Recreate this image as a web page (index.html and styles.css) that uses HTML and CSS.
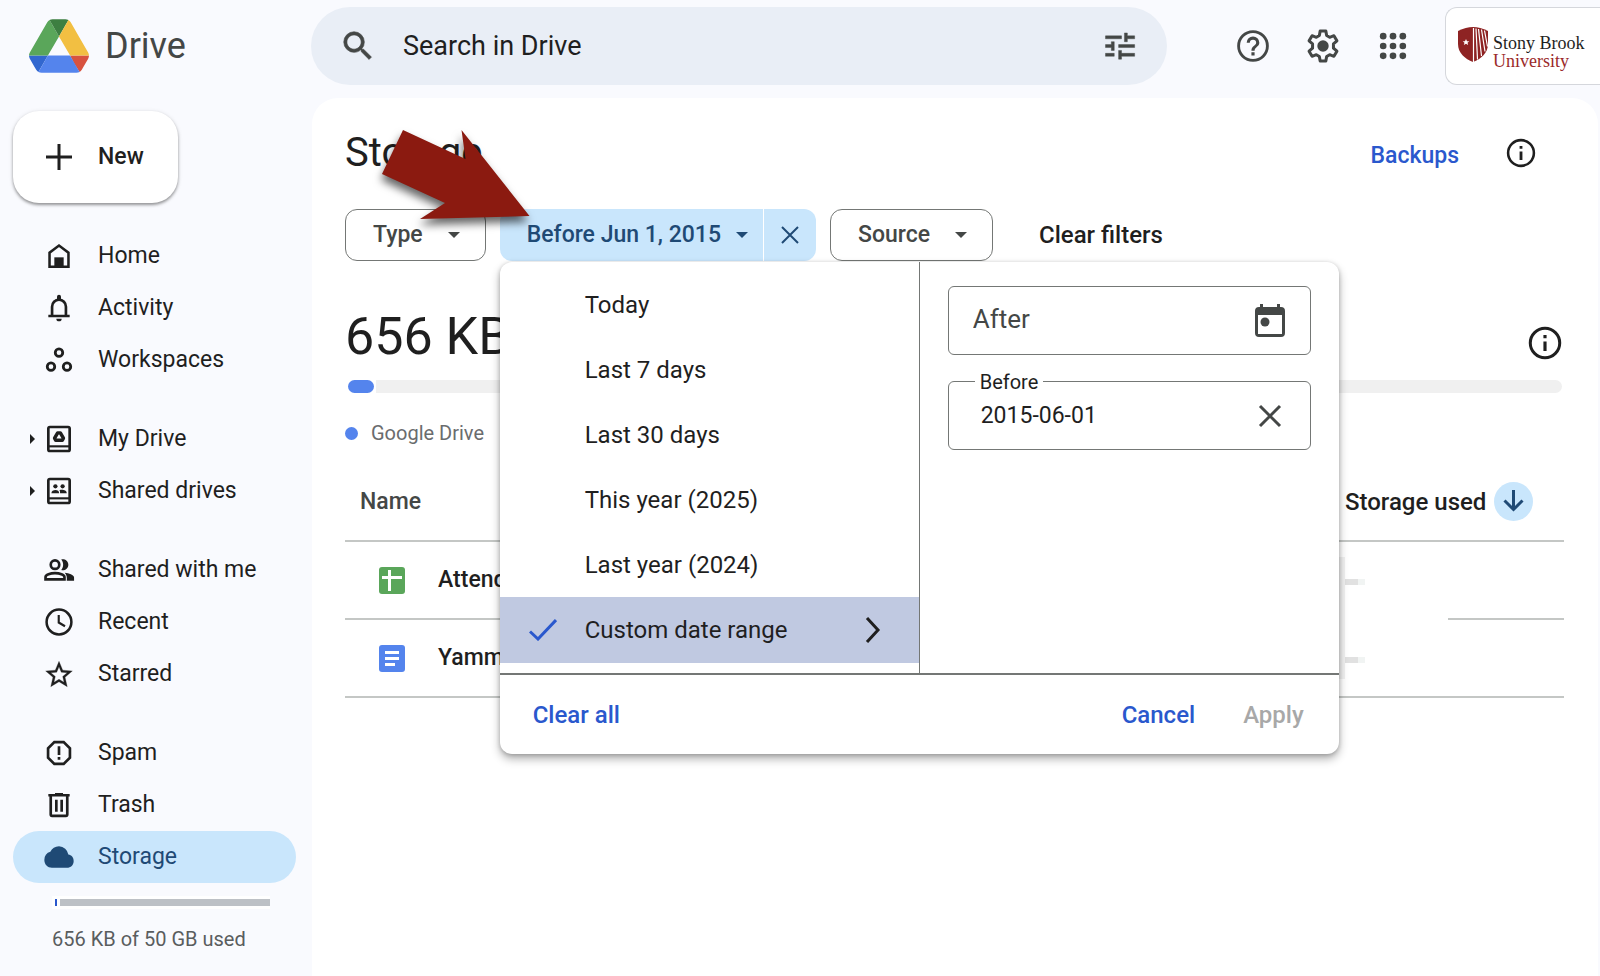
FILE: index.html
```
<!DOCTYPE html>
<html lang="en">
<head>
<meta charset="UTF-8">
<meta name="viewport" content="width=device-width, initial-scale=1.0">
<title>Storage - Drive</title>
<link rel="stylesheet" href="styles.css">
</head>
<body>

  <header class="topbar">
    <a class="brand" href="#">
      <svg width="60" height="54" viewBox="0 0 87.3 78" aria-hidden="true">
        <path d="m6.6 66.85 3.85 6.65c.8 1.4 1.95 2.5 3.3 3.3l13.75-23.8h-27.5c0 1.55.4 3.1 1.2 4.5z" fill="#3267cf"/>
        <path d="m43.65 25-13.75-23.8c-1.35.8-2.5 1.9-3.3 3.3l-25.4 44a9.06 9.06 0 0 0-1.2 4.5h27.5z" fill="#5aa65a"/>
        <path d="m73.55 76.8c1.35-.8 2.5-1.9 3.3-3.3l1.6-2.75 7.65-13.25c.8-1.4 1.2-2.95 1.2-4.5h-27.5l5.85 11.5z" fill="#d8523f"/>
        <path d="m43.65 25 13.75-23.8c-1.35-.8-2.9-1.2-4.5-1.2h-18.5c-1.6 0-3.15.45-4.5 1.2z" fill="#3d7f41"/>
        <path d="m59.8 53h-32.3l-13.75 23.8c1.35.8 2.9 1.2 4.5 1.2h50.8c1.6 0 3.15-.45 4.5-1.2z" fill="#5484ed"/>
        <path d="m73.4 26.5-12.7-22c-.8-1.4-1.95-2.5-3.3-3.3l-13.75 23.8 16.15 28h27.45c0-1.55-.4-3.1-1.2-4.5z" fill="#f2bf42"/>
      </svg>
      <span>Drive</span>
    </a>

    <form class="search">
      <button type="button" class="icon-btn" aria-label="Search">
        <svg width="38" height="38" viewBox="0 0 24 24"><path fill="currentColor" stroke="currentColor" stroke-width=".4" d="M15.500 14h-.79l-.28-.27A6.470 6.470 0 0 0 16 9.500 6.500 6.500 0 1 0 9.500 16c1.610 0 3.090-.59 4.230-1.570l.27.28v.79l5 4.990L20.490 19zm-6 0C7.010 14 5 11.990 5 9.500S7.010 5 9.500 5 14 7.010 14 9.500 11.990 14 9.500 14z"/></svg>
      </button>
      <input type="text" id="q" placeholder="Search in Drive" aria-label="Search in Drive">
      <button type="button" class="icon-btn" aria-label="Search options">
        <svg width="38" height="38" viewBox="0 0 24 24"><g transform="translate(1 1) scale(.92)"><path fill="currentColor" stroke="currentColor" stroke-width=".3" d="M2 17v2h6v-2zM2 5v2h11V5zm11 16v-2h9v-2h-9v-2h-2v6zM6 9v2H2v2h4v2h2V9zm16 4v-2H11v2zm-7-4h2V7h5V5h-5V3h-2z"/></g></svg>
      </button>
    </form>

    <button type="button" class="icon-btn" aria-label="Support">
      <svg width="38" height="38" viewBox="0 0 24 24"><path fill="currentColor" d="M11 18h2v-2h-2zm1-16a10 10 0 1 0 0 20 10 10 0 0 0 0-20zm0 18.200a8.200 8.200 0 1 1 0-16.400 8.200 8.200 0 0 1 0 16.400zM12 6a4 4 0 0 0-4 4h2a2 2 0 1 1 4 0c0 2-3 1.750-3 5h2c0-2.250 3-2.500 3-5a4 4 0 0 0-4-4z"/></svg>
    </button>
    <button type="button" class="icon-btn" aria-label="Settings">
      <svg width="38" height="38" viewBox="0 0 24 24"><path fill="none" stroke="currentColor" stroke-width="1.900" stroke-linejoin="round" d="M10.200 2.600h3.600l.5 2.800 1.900 1.100 2.700-1 1.900 3.200-2.200 1.900v2.800l2.200 1.900-1.900 3.200-2.700-1-1.900 1.100-.5 2.800h-3.600l-.5-2.800-1.900-1.100-2.700 1-1.900-3.200 2.200-1.900v-2.800L3.200 8.700l1.900-3.200 2.700 1 1.900-1.100z"/><circle cx="12" cy="12" r="3.600" fill="currentColor"/></svg>
    </button>
    <button type="button" class="icon-btn" aria-label="Apps">
      <svg width="38" height="38" viewBox="0 0 24 24" fill="currentColor"><circle cx="5.800" cy="5.800" r="2.100"/><circle cx="12" cy="5.800" r="2.100"/><circle cx="18.200" cy="5.800" r="2.100"/><circle cx="5.800" cy="12" r="2.100"/><circle cx="12" cy="12" r="2.100"/><circle cx="18.200" cy="12" r="2.100"/><circle cx="5.800" cy="18.200" r="2.100"/><circle cx="12" cy="18.200" r="2.100"/><circle cx="18.200" cy="18.200" r="2.100"/></svg>
    </button>

    <a class="account" href="#">
      <svg width="30" height="35" viewBox="0 0 30 35" aria-hidden="true">
        <path fill="#8e2323" d="M0 4Q8 0 15 0t15 4v13c0 9-7 15-15 18C7 32 0 26 0 17z"/>
        <path fill="#fff" d="M8 12l1 2.200h2.300l-1.800 1.500.7 2.300L8 16.700 5.800 18l.7-2.300-1.800-1.500H7z"/>
        <path stroke="#fff" stroke-width="1.200" d="M15.500 1v34M18 1.500l1.500 31M20.500 2l3 27M23.500 2.500l3.500 22M26.500 3.500l3 16"/>
      </svg>
      <span class="account-name">Stony Brook<br><span class="account-sub">University</span></span>
    </a>
  </header>

  <div class="layout">
    <aside class="sidebar">
      <button type="button" class="new-btn">
        <svg width="32" height="32" viewBox="0 0 32 32"><path stroke="currentColor" stroke-width="3" d="M16 3v26M3 16h26"/></svg>
        New
      </button>

      <nav>
        <ul class="nav-group">
          <li><a href="#">
            <svg class="icon" viewBox="0 0 24 24"><path fill="none" stroke="currentColor" stroke-width="1.900" d="M4.900 20.100V9.500L12 4.200l7.100 5.300v10.600z"/><path fill="currentColor" d="M8.500 13h7v8h-7z"/></svg>
            Home</a></li>
          <li><a href="#">
            <svg class="icon" viewBox="0 0 24 24"><path fill="none" stroke="currentColor" stroke-width="2" d="M4 18h16M6.800 18v-7a5.200 5.200 0 0 1 10.400 0v7"/><path fill="currentColor" d="M10.500 3.500a1.500 1.500 0 0 1 3 0V6h-3zM10 20h4a2 2 0 0 1-4 0z"/></svg>
            Activity</a></li>
          <li><a href="#">
            <svg class="icon" viewBox="0 0 24 24" fill="none" stroke="currentColor" stroke-width="2.100"><circle cx="12" cy="6.500" r="2.800"/><circle cx="6" cy="17" r="2.800"/><circle cx="18" cy="17" r="2.800"/></svg>
            Workspaces</a></li>
        </ul>
        <ul class="nav-group">
          <li><a class="has-caret" href="#">
            <svg class="icon" viewBox="0 0 24 24"><rect x="4" y="3" width="16" height="18" rx="1.200" fill="none" stroke="currentColor" stroke-width="2"/><path stroke="currentColor" stroke-width="1.600" d="M4 17.500h16"/><path fill="none" stroke="currentColor" stroke-width="2.600" stroke-linejoin="round" d="M11 7.400h2l2.300 4-.8 1.600h-5l-.8-1.600z"/></svg>
            My Drive</a></li>
          <li><a class="has-caret" href="#">
            <svg class="icon" viewBox="0 0 24 24"><rect x="4" y="3" width="16" height="18" rx="1.200" fill="none" stroke="currentColor" stroke-width="2"/><path stroke="currentColor" stroke-width="1.600" d="M4 17.500h16"/><g fill="currentColor"><circle cx="9.300" cy="8.500" r="1.600"/><circle cx="14.700" cy="8.500" r="1.600"/><path d="M6.300 13.700c0-1.700 1.500-2.500 3.100-2.500s2.700.8 2.700 2.500zM12.800 13.700c0-1.200 0-1.700-.5-2.200 1.500-.7 5.500-.5 5.500 2.200z"/></g></svg>
            Shared drives</a></li>
        </ul>
        <ul class="nav-group">
          <li><a href="#">
            <svg class="icon" viewBox="0 0 24 24"><g fill="none" stroke="currentColor" stroke-width="2"><circle cx="9" cy="8" r="3.200"/><path d="M1.900 19v-1.700c0-1.700 3.600-2.900 7.100-2.900s7.100 1.200 7.100 2.900V19z"/></g><g fill="currentColor"><path d="M13.700 12c1.900-2.200 1.900-5.600 0-7.900 2.500-.6 5.300 1 5.300 3.900s-2.800 4.700-5.300 4zM17.800 20c.3-2.500 0-4.500-1.500-6 3 .3 7 1.500 7 3.600V20z"/></g></svg>
            Shared with me</a></li>
          <li><a href="#">
            <svg class="icon" viewBox="0 0 24 24" fill="none" stroke="currentColor" stroke-width="1.900"><circle cx="12" cy="12" r="9.300"/><path stroke-width="1.600" d="M11.800 6.800v5.600l4.700 2.800"/></svg>
            Recent</a></li>
          <li><a href="#">
            <svg class="icon" viewBox="0 0 24 24"><path fill="currentColor" stroke="currentColor" stroke-width=".2" d="m22 9.740-7.190-.62L12 2.500 9.190 9.130 2 9.740l5.460 4.730L5.820 21.500 12 17.770l6.180 3.730-1.630-7.030zM12 15.900l-3.760 2.270 1-4.280-3.320-2.880 4.380-.38L12 6.600l1.710 4.040 4.380.38-3.320 2.880 1 4.280z"/></svg>
            Starred</a></li>
        </ul>
        <ul class="nav-group">
          <li><a href="#">
            <svg class="icon" viewBox="0 0 24 24"><path fill="none" stroke="currentColor" stroke-width="2" d="M8.500 3.800h7l4.700 4.700v7l-4.700 4.700h-7l-4.700-4.700v-7z"/><path fill="currentColor" d="M11 7h2v6.500h-2zM11 15h2v2h-2z"/></svg>
            Spam</a></li>
          <li><a href="#">
            <svg class="icon" viewBox="0 0 24 24"><path fill="none" stroke="currentColor" stroke-width="2" d="M4 4.700h16M5.800 5v14.200c0 .6.400.9 1 .9h10.400c.6 0 1-.3 1-.9V5M10 8v9M14 8v9"/><path fill="currentColor" d="M9 3h6v2H9z"/></svg>
            Trash</a></li>
          <li><a class="active" href="#">
            <svg class="icon" viewBox="0 0 24 24"><path fill="currentColor" d="M19 10.200A7.200 7.200 0 0 0 12 4c-2.900 0-5.300 1.600-6.500 4.100A6 6 0 0 0 1 14.200C1 17.500 3.500 20 6.700 20H18c2.800 0 5-2.100 5-4.900 0-2.600-1.700-4.700-4-4.900z"/></svg>
            Storage</a></li>
        </ul>
      </nav>

      <div class="quota">
        <div class="quota-bar"><span class="quota-used"></span><span class="quota-free"></span></div>
        <p>656 KB of 50 GB used</p>
      </div>
    </aside>

    <main class="content">
      <div class="title-row">
        <h1>Storage</h1>
        <a class="backups" href="#">Backups</a>
        <button type="button" class="icon-btn dark" aria-label="View details">
          <svg width="34" height="34" viewBox="0 0 24 24"><circle cx="12" cy="12" r="9.100" fill="none" stroke="currentColor" stroke-width="1.800"/><path fill="currentColor" d="M11 7h2v2h-2zM11 11h2v6h-2z"/></svg>
        </button>
        <!-- pointer to the date filter -->
        <svg class="arrow" width="180" height="110" viewBox="0 0 180 110" aria-hidden="true"><path fill="#8b1a10" d="M41 10 103.500 39 99.500 10 167.500 96 58 99 83 83 20 54z"/></svg>
      </div>

      <div class="filters">
        <button type="button" class="chip">Type <span class="tri"></span></button>
        <div class="date-filter">
          <button type="button" class="chip-on chip-date">Before Jun 1, 2015 <span class="tri"></span></button>
          <button type="button" class="chip-on chip-x" aria-label="Remove date filter">
            <svg width="18" height="18" viewBox="0 0 18 18"><path stroke="currentColor" stroke-width="2" d="M1 1l16 16M17 1 1 17"/></svg>
          </button>

          <div class="popover">
            <div class="popover-body">
              <div class="options">
                <button type="button">Today</button>
                <button type="button">Last 7 days</button>
                <button type="button">Last 30 days</button>
                <button type="button">This year (2025)</button>
                <button type="button">Last year (2024)</button>
                <button type="button" class="selected">
                  <svg class="check" width="28" height="22" viewBox="0 0 28 22"><path fill="none" stroke="#2a58cd" stroke-width="3" d="M1 12.500 9 20 27 1"/></svg>
                  Custom date range
                  <svg class="chevron" width="16" height="26" viewBox="0 0 16 26"><path fill="none" stroke="#1f1f1f" stroke-width="3" d="m2 1 11 12L2 25"/></svg>
                </button>
              </div>
              <div class="dates">
                <div class="field">
                  <input type="text" id="after" placeholder="After" aria-label="After">
                  <button type="button" class="icon-btn" aria-label="Open calendar">
                    <svg width="32" height="34" viewBox="0 0 32 34"><path fill="currentColor" d="M6 0h3v3h14V0h3v3h1a4 4 0 0 1 4 4v22a4 4 0 0 1-4 4H5a4 4 0 0 1-4-4V7a4 4 0 0 1 4-4h1zM4 11v19h24V11z"/><circle cx="11" cy="18" r="4.500" fill="currentColor"/></svg>
                  </button>
                </div>
                <div class="field filled">
                  <label for="before">Before</label>
                  <input type="text" id="before" value="2015-06-01">
                  <button type="button" class="icon-btn" aria-label="Clear before date">
                    <svg width="32" height="32" viewBox="0 0 32 32"><path stroke="currentColor" stroke-width="3" d="m6 6 20 20M26 6 6 26"/></svg>
                  </button>
                </div>
              </div>
            </div>
            <div class="popover-foot">
              <button type="button">Clear all</button>
              <button type="button" class="push">Cancel</button>
              <button type="button" disabled>Apply</button>
            </div>
          </div>
        </div>
        <button type="button" class="chip">Source <span class="tri"></span></button>
        <button type="button" class="clear-filters">Clear filters</button>
      </div>

      <div class="usage-row">
        <p class="usage">656 KB</p>
        <button type="button" class="icon-btn dark" aria-label="About storage">
          <svg width="38" height="38" viewBox="0 0 24 24"><circle cx="12" cy="12" r="9.300" fill="none" stroke="currentColor" stroke-width="1.900"/><path fill="currentColor" d="M11 7h2v2h-2zM11 11h2v6h-2z"/></svg>
        </button>
      </div>
      <div class="usage-bar"><span class="used"></span><span class="free"></span></div>
      <p class="legend">Google Drive</p>

      <div class="files">
        <table>
          <thead>
            <tr>
              <th>Name</th>
              <th class="size"><span class="sort">Storage used
                <svg width="39" height="39" viewBox="0 0 39 39"><circle cx="19.500" cy="19.500" r="19.500" fill="#c9e6fc"/><path fill="none" stroke="#1f4a75" stroke-width="3" d="M19.500 8v19M10.500 18.500l9 9 9-9"/></svg>
              </span></th>
            </tr>
          </thead>
          <tbody>
            <tr>
              <td><span class="file">
                <svg width="26" height="27" viewBox="0 0 26 27"><rect width="26" height="27" rx="3" fill="#5aa65a"/><path stroke="#fff" stroke-width="3" d="M3 10.500h20M10.500 3v21"/></svg>
                Attendance</span></td>
              <td></td>
            </tr>
            <tr>
              <td><span class="file">
                <svg width="26" height="27" viewBox="0 0 26 27"><rect width="26" height="27" rx="3" fill="#5484ed"/><path stroke="#fff" stroke-width="3" d="M6 7.500h14M6 13.500h14M6 19.500h10"/></svg>
                Yammer</span></td>
              <td></td>
            </tr>
          </tbody>
        </table>
        <!-- sizes are hidden -->
        <div class="mask"><span class="mask-size"></span><span class="mask-size"></span></div>
      </div>
    </main>
  </div>

</body>
</html>
```
FILE: styles.css
```
* {
  box-sizing: border-box;
}

body {
  margin: 0;
  min-height: 100vh;
  display: flex;
  flex-direction: column;
  background: #f9fafe;
  color: #1f1f1f;
  font-family: Roboto, "Liberation Sans", sans-serif;
  font-size: 23px;
  line-height: 32px;
  overflow-x: hidden;
}

h1, p, ul {
  margin: 0;
  padding: 0;
  font-weight: 400;
}

a {
  color: inherit;
  text-decoration: none;
}

svg {
  display: block;
  flex: none;
}

button, input {
  font: inherit;
  color: inherit;
  background: none;
  border: none;
  padding: 0;
}

button {
  cursor: pointer;
}

.icon-btn {
  color: #444746;
  flex: none;
}

.icon-btn.dark {
  color: #1f1f1f;
}

/* top bar */
.topbar {
  display: flex;
  align-items: center;
  gap: 32px;
  height: 98px;
  padding-bottom: 6px;
}

.brand {
  display: flex;
  align-items: center;
  gap: 16px;
  width: 279px;
  padding-left: 29px;
  color: #444746;
  font-size: 36px;
  line-height: 48px;
}

.search {
  flex: 1;
  display: flex;
  align-items: center;
  height: 78px;
  margin-right: 35px;
  padding: 0 28px;
  border-radius: 39px;
  background: #e9eef6;
}

.search input {
  flex: 1;
  min-width: 0;
  padding-left: 26px;
  font-size: 27px;
}

.search input::placeholder {
  color: #1f1f1f;
}

.account {
  display: flex;
  align-items: center;
  gap: 5px;
  width: 155px;
  height: 78px;
  margin-left: 1px;
  padding-left: 12px;
  border: 1px solid #d5d7dc;
  border-right: none;
  border-radius: 12px 0 0 12px;
  background: #fff;
}

.account svg {
  margin-bottom: 4px;
}

.account-name {
  padding-top: 12px;
  font-family: "Liberation Serif", serif;
  font-size: 18px;
  line-height: 18px;
  white-space: nowrap;
}

.account-sub {
  color: #9b2a2a;
}

.layout {
  flex: 1;
  display: grid;
  grid-template-columns: 312px 1fr;
}

/* sidebar */
.sidebar {
  padding: 13px 16px 0 13px;
}

.new-btn {
  display: flex;
  align-items: center;
  gap: 23px;
  width: 165px;
  height: 92px;
  margin-bottom: 27px;
  padding-left: 30px;
  border-radius: 26px;
  background: #fff;
  box-shadow: 0 2px 3px rgba(0, 0, 0, 0.35), 0 1px 5px rgba(0, 0, 0, 0.12);
  font-weight: 500;
}

.nav-group {
  list-style: none;
  margin-bottom: 27px;
}

.nav-group:last-child {
  margin-bottom: 0;
}

.nav-group a {
  position: relative;
  display: flex;
  align-items: center;
  gap: 23px;
  height: 52px;
  padding-left: 30px;
  border-radius: 26px;
}

.nav-group a.active {
  background: #c9e6fc;
  color: #1f4a75;
}

.icon {
  width: 32px;
  height: 32px;
}

.has-caret::before {
  content: "";
  position: absolute;
  left: 17px;
  top: 21px;
  border: 5px solid transparent;
  border-left-color: #1f1f1f;
  border-right: none;
}

.quota {
  padding: 13px 13px 0 39px;
  color: #5a5d5e;
  font-size: 20px;
}

.quota-bar {
  display: flex;
  gap: 3px;
  margin-right: 13px;
  padding: 3px 0 3px 3px;
  background: #fff;
}

.quota-used {
  width: 2px;
  height: 7px;
  background: #2a58cd;
}

.quota-free {
  flex: 1;
  height: 7px;
  background: #bdc1c6;
}

.quota p {
  margin-top: 14px;
}

/* main panel */
.content {
  margin-right: 2px;
  padding: 27px 34px 27px 33px;
  border-radius: 26px 26px 0 0;
  background: #fff;
}

.title-row {
  position: relative;
  display: flex;
  align-items: center;
  height: 56px;
  padding-right: 26px;
}

h1 {
  flex: 1;
  font-size: 40px;
  line-height: 48px;
}

.backups {
  margin-right: 45px;
  padding-top: 5px;
  color: #2a58cd;
  font-weight: 500;
}

.arrow {
  position: absolute;
  left: 17px;
  top: -5px;
  z-index: 3;
  filter: drop-shadow(-1px 6px 4px rgba(0, 0, 0, 0.6));
}

.filters {
  display: flex;
  gap: 14px;
  margin-top: 28px;
  font-weight: 500;
}

.chip {
  display: flex;
  align-items: center;
  gap: 25px;
  height: 52px;
  padding: 0 25px 0 27px;
  border: 1px solid #747775;
  border-radius: 12px;
  color: #444746;
}

.tri {
  border: 6px solid transparent;
  border-top-color: currentColor;
  border-bottom: none;
}

.date-filter {
  position: relative;
  display: flex;
  gap: 1px;
}

.chip-on {
  display: flex;
  align-items: center;
  height: 52px;
  background: #c9e6fc;
  color: #1f4a75;
}

.chip-date {
  gap: 15px;
  padding: 0 15px 0 27px;
  border-radius: 12px 0 0 12px;
}

.chip-x {
  justify-content: center;
  width: 52px;
  border-radius: 0 12px 12px 0;
}

.clear-filters {
  margin-left: 32px;
  font-size: 24px;
}

/* date menu */
.popover {
  position: absolute;
  top: 53px;
  left: 0;
  z-index: 2;
  width: 839px;
  border-radius: 12px;
  background: #fff;
  box-shadow: 0 5px 10px rgba(0, 0, 0, 0.3), 0 1px 4px rgba(0, 0, 0, 0.2);
  font-size: 24px;
  font-weight: 400;
}

.popover-body {
  display: grid;
  grid-template-columns: 420px minmax(0, 1fr);
  border-bottom: 2px solid #747775;
}

.options {
  padding: 10px 0;
  border-right: 1px solid #747775;
}

.options button {
  position: relative;
  display: flex;
  align-items: center;
  width: 100%;
  height: 65px;
  padding-left: 85px;
  text-align: left;
}

.options .selected {
  height: 66px;
  background: #c0c9e1;
}

.check {
  position: absolute;
  left: 29px;
}

.chevron {
  margin-left: auto;
  margin-right: 38px;
}

.dates {
  display: flex;
  flex-direction: column;
  gap: 26px;
  padding: 24px 28px;
}

.field {
  position: relative;
  display: flex;
  align-items: center;
  height: 69px;
  padding: 0 24px;
  border: 1px solid #747775;
  border-radius: 6px;
}

.field input {
  flex: 1;
  min-width: 0;
  font-size: 23px;
}

.field input::placeholder {
  color: #444746;
  font-size: 26px;
}

.field.filled input {
  padding-left: 8px;
}

.field label {
  position: absolute;
  left: 26px;
  top: -12px;
  padding: 0 5px;
  background: #fff;
  font-size: 20px;
  line-height: 24px;
}

.popover-foot {
  display: flex;
  align-items: center;
  gap: 48px;
  height: 79px;
  padding: 0 35px 0 33px;
  color: #2a58cd;
  font-weight: 500;
}

.push {
  margin-left: auto;
}

.popover-foot button:disabled {
  color: #a8a8a8;
}

/* storage usage */
.usage-row {
  display: flex;
  align-items: flex-end;
  justify-content: space-between;
  margin-top: 46px;
}

.usage-row .icon-btn {
  margin-bottom: 5px;
}

.usage {
  font-size: 52px;
  line-height: 60px;
}

.usage-bar {
  display: flex;
  gap: 2px;
  margin: 13px 2px 0 3px;
}

.used {
  width: 26px;
  height: 13px;
  border-radius: 7px;
  background: #5484ed;
}

.free {
  flex: 1;
  height: 13px;
  border-radius: 0 7px 7px 0;
  background: #f0f0f0;
}

.legend {
  display: flex;
  align-items: center;
  gap: 13px;
  margin-top: 28px;
  color: #6a6c6e;
  font-size: 20px;
  line-height: 24px;
}

.legend::before {
  content: "";
  width: 13px;
  height: 13px;
  border-radius: 50%;
  background: #5484ed;
}

/* file table */
.files {
  position: relative;
  margin-top: 18px;
}

table {
  width: 100%;
  border-collapse: collapse;
}

th, td {
  height: 78px;
  padding: 0;
  border-bottom: 2px solid #c4c7c5;
  text-align: left;
  font-weight: 500;
}

th {
  padding-left: 15px;
  color: #444746;
}

th.size {
  width: 234px;
  color: #1f1f1f;
  font-size: 24px;
}

.sort {
  display: flex;
  align-items: center;
  gap: 8px;
}

.file {
  display: flex;
  align-items: center;
  gap: 33px;
  padding-left: 34px;
}

.mask {
  position: absolute;
  top: 94px;
  right: 116px;
  display: flex;
  flex-direction: column;
  gap: 72px;
  width: 109px;
  height: 122px;
  padding-top: 22px;
  border-left: 6px solid #f1f1f1;
  background: #fff;
}

.mask-size {
  width: 20px;
  height: 6px;
  border-right: 7px solid #f1f4f3;
  background: #e1e1e1;
}
```
